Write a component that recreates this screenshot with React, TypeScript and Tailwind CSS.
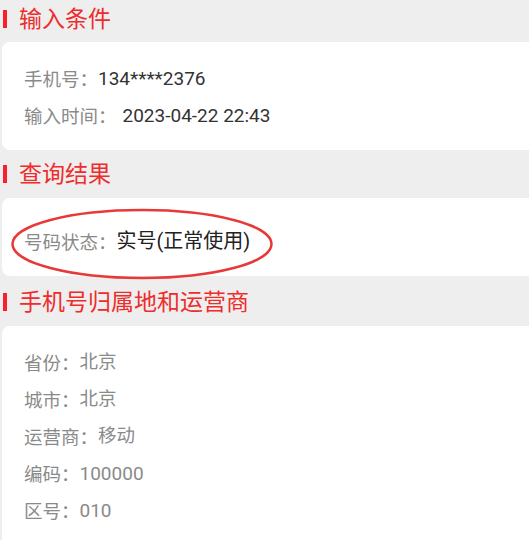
import React from 'react'

const font = { fontFamily: 'Roboto, "Noto Sans CJK SC", sans-serif' }
const cjk = "font-['Noto_Sans_CJK_SC',sans-serif] [text-spacing-trim:space-all] [font-feature-settings:'fwid']"

function SectionTitle({ title }: { title: string }) {
  return (
    <div className="h-12 flex items-center">
      <span className="ml-[3px] w-[4px] h-[18px] bg-[#f5222d]" />
      <h2 className="ml-[12px] text-[23px] leading-none text-[#ee2c2c]">{title}</h2>
    </div>
  )
}

function Row({ label, value, valueClass }: { label: string; value: string; valueClass: string }) {
  return (
    <div className="flex items-center h-[37px] leading-[37px]">
      <span className={`text-[18.5px] text-[#8a8a8a] ${cjk}`}>{label}</span>
      <span className={valueClass}>{value}</span>
    </div>
  )
}

export default function App() {
  return (
    <div className="w-[529px] h-[540px] overflow-hidden bg-[#eeeeee]" style={font}>
      <div className="-mt-[5px]">
        <SectionTitle title="输入条件" />
        <div className="-mt-[1px] ml-[2px] bg-white rounded-l-lg pl-[22px] pt-[18px] pb-[16px]">
          <Row label="手机号：" value="134****2376" valueClass="text-[19px] text-[#333333]" />
          <Row label="输入时间：" value="2023-04-22 22:43" valueClass="ml-[6px] text-[19px] text-[#333333]" />
        </div>

        <SectionTitle title="查询结果" />
        <div className="relative ml-[2px] bg-white rounded-l-lg pl-[22px] pt-[25px] pb-[16px]">
          <div className="flex items-center h-[37px] leading-[37px]">
            <span className={`text-[18.5px] text-[#8a8a8a] ${cjk}`}>号码状态：</span>
            <span className="text-[20px] text-[#222222]">实号(正常使用)</span>
          </div>
          <svg className="absolute left-[8px] top-[9px]" width="266" height="74" viewBox="0 0 266 74">
            <ellipse cx="132" cy="37" rx="129.5" ry="34" fill="none" stroke="#e8393a" strokeWidth="2.5" />
          </svg>
        </div>

        <div className="h-[2px]" />
        <SectionTitle title="手机号归属地和运营商" />
        <div className="ml-[2px] bg-white rounded-l-lg pl-[22px] pt-[18px] pb-[16px]">
          <Row label="省份：" value="北京" valueClass="text-[18.5px] text-[#8a8a8a]" />
          <Row label="城市：" value="北京" valueClass="text-[18.5px] text-[#8a8a8a]" />
          <Row label="运营商：" value="移动" valueClass="text-[18.5px] text-[#8a8a8a]" />
          <Row label="编码：" value="100000" valueClass="text-[19px] text-[#8a8a8a]" />
          <Row label="区号：" value="010" valueClass="text-[19px] text-[#8a8a8a]" />
        </div>
      </div>
    </div>
  )
}
